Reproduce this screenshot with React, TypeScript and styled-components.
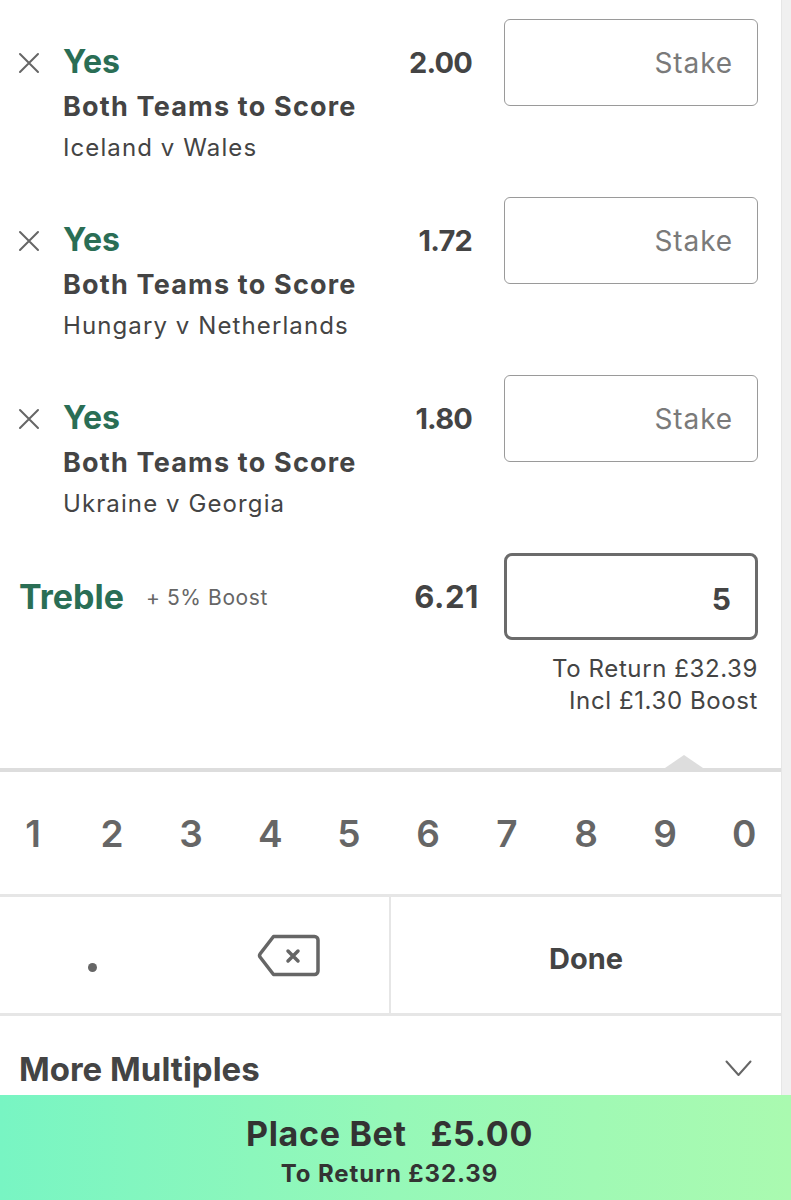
import React from "react";
import styled, { createGlobalStyle } from "styled-components";

const GlobalStyle = createGlobalStyle`
  html, body {
    margin: 0;
    padding: 0;
    background: #ffffff;
  }
  body {
    font-family: Inter, "Liberation Sans", Arial, sans-serif;
    color: #444444;
  }
`;

const GREEN = "#2a6e55";

const Screen = styled.div`
  width: 791px;
  height: 1200px;
  display: flex;
  flex-direction: column;
  overflow: hidden;
  background: #ffffff;
`;

const Body = styled.div`
  flex: 1;
  display: flex;
  min-height: 0;
`;

const Main = styled.div`
  flex: 1;
  display: flex;
  flex-direction: column;
`;

const ScrollTrack = styled.div`
  width: 9px;
  background: #f0f0f0;
  border-left: 1px solid #e6e6e6;
`;

const BetList = styled.div`
  padding: 19px 23px 0 0;
  display: flex;
  flex-direction: column;
`;

const Selection = styled.div`
  height: 178px;
  display: flex;
  align-items: flex-start;
`;

const RemoveCell = styled.div`
  width: 63px;
  height: 87px;
  display: flex;
  align-items: center;
  padding-left: 18px;
  box-sizing: border-box;
  color: #666666;
`;

const Info = styled.div`
  flex: 1;
  display: flex;
  flex-direction: column;
  padding-top: 24px;
`;

const Outcome = styled.div`
  font-size: 32px;
  line-height: 38px;
  font-weight: 700;
  color: ${GREEN};
`;

const Market = styled.div`
  margin-top: 10px;
  font-size: 27px;
  line-height: 32px;
  font-weight: 700;
  color: #444444;
  letter-spacing: 1.2px;
`;

const EventName = styled.div`
  margin-top: 10px;
  font-size: 24px;
  line-height: 30px;
  color: #444444;
  letter-spacing: 1.1px;
`;

const Odds = styled.div<{ gap: number; wide?: boolean }>`
  height: 87px;
  display: flex;
  align-items: center;
  margin-right: ${({ gap }) => gap}px;
  font-size: ${({ wide }) => (wide ? "31px" : "29px")};
  letter-spacing: ${({ wide }) => (wide ? "0.6px" : "-0.8px")};
  font-weight: 700;
  color: #444444;
`;

const StakeBox = styled.div<{ active?: boolean }>`
  width: 254px;
  height: 87px;
  box-sizing: border-box;
  border: ${({ active }) => (active ? "3px solid #6b6b6b" : "1.5px solid #9a9a9a")};
  border-radius: ${({ active }) => (active ? "8px" : "6px")};
  display: flex;
  align-items: center;
  justify-content: flex-end;
  padding-right: 24px;
  padding-top: ${({ active }) => (active ? "4px" : "0")};
  font-size: ${({ active }) => (active ? "30px" : "28px")};
  font-weight: ${({ active }) => (active ? 700 : 400)};
  letter-spacing: ${({ active }) => (active ? "0" : "0.9px")};
  color: ${({ active }) => (active ? "#444444" : "#7a7a7a")};
`;

const MultipleRow = styled.div`
  display: flex;
  flex-direction: column;
`;

const MultipleTop = styled.div`
  height: 87px;
  display: flex;
  align-items: center;
  padding-left: 19px;
`;

const MultipleName = styled.div`
  font-size: 34px;
  font-weight: 700;
  color: ${GREEN};
`;

const BoostTag = styled.div`
  margin-left: 22px;
  flex: 1;
  font-size: 21px;
  color: #666666;
  letter-spacing: 0.6px;
  padding-top: 2px;
`;

const ReturnInfo = styled.div`
  margin-top: 13px;
  text-align: right;
  font-size: 24px;
  line-height: 32px;
  color: #444444;
  letter-spacing: 0.6px;
`;

const Keypad = styled.div`
  margin-top: 51px;
  position: relative;
  border-top: 4px solid #dddddd;
`;

const Pointer = styled.div`
  position: absolute;
  top: -17px;
  left: 665px;
  width: 0;
  height: 0;
  border-left: 19px solid transparent;
  border-right: 19px solid transparent;
  border-bottom: 13px solid #dddddd;
`;

const DigitRow = styled.div`
  height: 122px;
  display: flex;
  align-items: center;
  justify-content: space-between;
  padding: 0 25px 0 21px;
  border-bottom: 3px solid #e6e6e6;
`;

const Digit = styled.div`
  width: 24px;
  text-align: center;
  font-size: 37px;
  font-weight: 600;
  color: #666666;
`;

const ActionRow = styled.div`
  height: 116px;
  display: flex;
  border-bottom: 3px solid #e6e6e6;
`;

const ActionHalf = styled.div`
  width: 389px;
  display: flex;
  border-right: 2px solid #e6e6e6;
`;

const Key = styled.div<{ shift?: number }>`
  flex: 1;
  display: flex;
  align-items: center;
  justify-content: center;
  padding-left: ${({ shift }) => (shift && shift > 0 ? shift : 0)}px;
  padding-right: ${({ shift }) => (shift && shift < 0 ? -shift : 0)}px;
`;

const Dot = styled.div`
  width: 9px;
  height: 9px;
  border-radius: 50%;
  background: #666666;
  margin-top: 24px;
`;

const DoneKey = styled.div`
  flex: 1;
  display: flex;
  align-items: center;
  justify-content: center;
  padding-top: 7px;
  font-size: 29px;
  font-weight: 700;
  color: #444444;
`;

const MoreRow = styled.div`
  height: 79px;
  display: flex;
  align-items: center;
  justify-content: space-between;
  padding: 26px 29px 0 19px;
  box-sizing: border-box;
`;

const MoreTitle = styled.div`
  font-size: 33px;
  font-weight: 700;
  color: #444444;
`;

const PlaceBetBar = styled.div`
  height: 105px;
  display: flex;
  flex-direction: column;
  align-items: center;
  justify-content: center;
  padding: 8px 12px 0 0;
  box-sizing: border-box;
  background: linear-gradient(90deg, #78f5c3 0%, #96f8b8 50%, #aafab0 100%);
  color: #333333;
`;

const PlaceBetMain = styled.div`
  display: flex;
  gap: 24px;
  font-size: 34px;
  line-height: 40px;
  font-weight: 700;
  letter-spacing: 0.7px;
`;

const PlaceBetSub = styled.div`
  margin-top: 5px;
  font-size: 24px;
  line-height: 30px;
  font-weight: 700;
  letter-spacing: 0.9px;
`;

type SelectionData = {
  outcome: string;
  market: string;
  event: string;
  odds: string;
};

const selections: SelectionData[] = [
  { outcome: "Yes", market: "Both Teams to Score", event: "Iceland v Wales", odds: "2.00" },
  { outcome: "Yes", market: "Both Teams to Score", event: "Hungary v Netherlands", odds: "1.72" },
  { outcome: "Yes", market: "Both Teams to Score", event: "Ukraine v Georgia", odds: "1.80" },
];

const digits = ["1", "2", "3", "4", "5", "6", "7", "8", "9", "0"];

const CloseIcon = () => (
  <svg width="22" height="22" viewBox="0 0 22 22" fill="none">
    <path d="M2 2L20 20M20 2L2 20" stroke="#666" strokeWidth="2" strokeLinecap="round" />
  </svg>
);

const BackspaceIcon = () => (
  <svg width="63" height="43" viewBox="0 0 63 43" fill="none">
    <path
      d="M16.5 2.5H57.5a3.5 3.5 0 0 1 3.5 3.5V37a3.5 3.5 0 0 1-3.5 3.5H16.5L3.2 23.3a3 3 0 0 1 0-3.6Z"
      stroke="#666"
      strokeWidth="3.5"
      strokeLinejoin="round"
    />
    <path d="M31 17L41 27M41 17L31 27" stroke="#666" strokeWidth="3.5" strokeLinecap="round" />
  </svg>
);

const ChevronDown = () => (
  <svg width="27" height="17" viewBox="0 0 27 17" fill="none">
    <path d="M1.5 1.5L13.5 15L25.5 1.5" stroke="#666" strokeWidth="2" strokeLinecap="round" strokeLinejoin="round" />
  </svg>
);

const App: React.FC = () => {
  return (
    <Screen>
      <GlobalStyle />
      <Body>
        <Main>
          <BetList>
            {selections.map((s) => (
              <Selection key={s.event}>
                <RemoveCell>
                  <CloseIcon />
                </RemoveCell>
                <Info>
                  <Outcome>{s.outcome}</Outcome>
                  <Market>{s.market}</Market>
                  <EventName>{s.event}</EventName>
                </Info>
                <Odds gap={32}>{s.odds}</Odds>
                <StakeBox>Stake</StakeBox>
              </Selection>
            ))}
            <MultipleRow>
              <MultipleTop>
                <MultipleName>Treble</MultipleName>
                <BoostTag>+ 5% Boost</BoostTag>
                <Odds gap={25} wide>
                  6.21
                </Odds>
                <StakeBox active>5</StakeBox>
              </MultipleTop>
              <ReturnInfo>
                <div>To Return £32.39</div>
                <div>Incl £1.30 Boost</div>
              </ReturnInfo>
            </MultipleRow>
          </BetList>
          <Keypad>
            <Pointer />
            <DigitRow>
              {digits.map((d) => (
                <Digit key={d}>{d}</Digit>
              ))}
            </DigitRow>
            <ActionRow>
              <ActionHalf>
                <Key shift={-10}>
                  <Dot />
                </Key>
                <Key shift={-8}>
                  <BackspaceIcon />
                </Key>
              </ActionHalf>
              <DoneKey>Done</DoneKey>
            </ActionRow>
          </Keypad>
          <MoreRow>
            <MoreTitle>More Multiples</MoreTitle>
            <ChevronDown />
          </MoreRow>
        </Main>
        <ScrollTrack />
      </Body>
      <PlaceBetBar>
        <PlaceBetMain>
          <span>Place Bet</span>
          <span>£5.00</span>
        </PlaceBetMain>
        <PlaceBetSub>To Return £32.39</PlaceBetSub>
      </PlaceBetBar>
    </Screen>
  );
};

export default App;
